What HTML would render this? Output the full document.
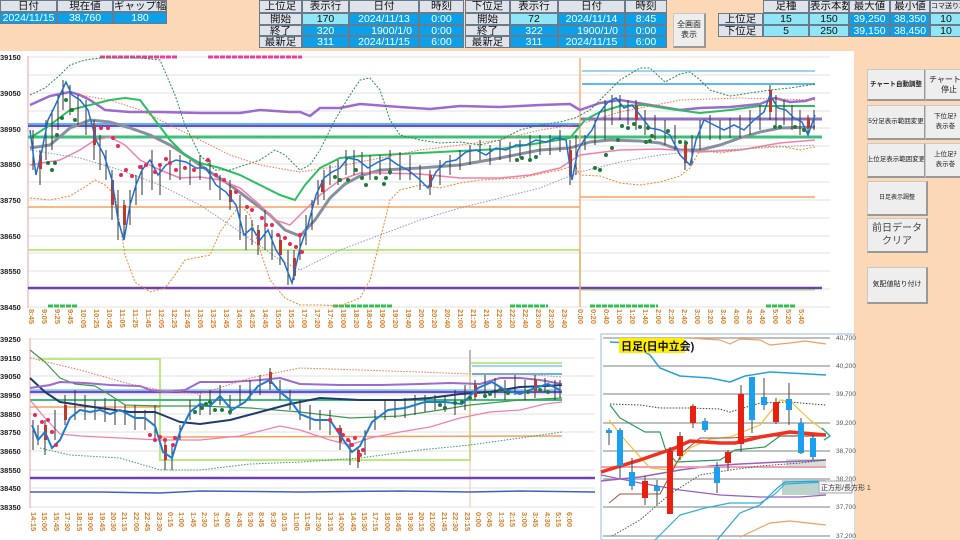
<!DOCTYPE html>
<html><head><meta charset="utf-8"><style>
*{margin:0;padding:0;box-sizing:border-box}
body{width:960px;height:540px;background:#fdd8b6;position:relative;overflow:hidden;font-family:"Liberation Sans","Noto Sans CJK JP",sans-serif}
.c{position:absolute;font-size:10.5px;line-height:11px;text-align:center;border:1px solid #6a7a8a;white-space:nowrap;overflow:hidden}
.h{background:#dfe3ea;color:#111}
.b{background:#0aa0ea;color:#fff}
.l{background:#8ee6f6;color:#111}
.btn{position:absolute;background:#eeeeee;border:1px solid #c8c8c8;border-right:2px solid #999;border-bottom:2px solid #999;font-size:6.5px;color:#222;display:flex;align-items:center;justify-content:center;text-align:center;line-height:10px;white-space:nowrap;overflow:hidden}
svg{position:absolute;left:0;top:0}
</style></head><body>
<div class="c h" style="left:0;top:0;width:57px;height:12px">日付</div>
<div class="c h" style="left:57px;top:0;width:56px;height:12px">現在値</div>
<div class="c h" style="left:113px;top:0;width:54px;height:12px">ギャップ幅</div>
<div class="c b" style="left:0;top:12px;width:57px;height:12px">2024/11/15</div>
<div class="c b" style="left:57px;top:12px;width:56px;height:12px">38,760</div>
<div class="c b" style="left:113px;top:12px;width:54px;height:12px">180</div>
<div class="c h" style="left:259px;top:0;width:43px;height:13px">上位足</div>
<div class="c h" style="left:302px;top:0;width:47px;height:13px">表示行</div>
<div class="c h" style="left:349px;top:0;width:70px;height:13px">日付</div>
<div class="c h" style="left:419px;top:0;width:45px;height:13px">時刻</div>
<div class="c h" style="left:259px;top:13px;width:43px;height:12px">開始</div>
<div class="c l" style="left:302px;top:13px;width:47px;height:12px">170</div>
<div class="c b" style="left:349px;top:13px;width:70px;height:12px">2024/11/13</div>
<div class="c b" style="left:419px;top:13px;width:45px;height:12px">0:00</div>
<div class="c h" style="left:259px;top:25px;width:43px;height:11px">終了</div>
<div class="c b" style="left:302px;top:25px;width:47px;height:11px">320</div>
<div class="c b" style="left:349px;top:25px;width:70px;height:11px;text-align:right;padding-right:6px">1900/1/0</div>
<div class="c b" style="left:419px;top:25px;width:45px;height:11px">0:00</div>
<div class="c h" style="left:259px;top:36px;width:43px;height:12px">最新足</div>
<div class="c b" style="left:302px;top:36px;width:47px;height:12px">311</div>
<div class="c b" style="left:349px;top:36px;width:70px;height:12px">2024/11/15</div>
<div class="c b" style="left:419px;top:36px;width:45px;height:12px">6:00</div>
<div class="c h" style="left:465px;top:0;width:45px;height:13px">下位足</div>
<div class="c h" style="left:510px;top:0;width:48px;height:13px">表示行</div>
<div class="c h" style="left:558px;top:0;width:67px;height:13px">日付</div>
<div class="c h" style="left:625px;top:0;width:42px;height:13px">時刻</div>
<div class="c h" style="left:465px;top:13px;width:45px;height:12px">開始</div>
<div class="c l" style="left:510px;top:13px;width:48px;height:12px">72</div>
<div class="c b" style="left:558px;top:13px;width:67px;height:12px">2024/11/14</div>
<div class="c b" style="left:625px;top:13px;width:42px;height:12px">8:45</div>
<div class="c h" style="left:465px;top:25px;width:45px;height:11px">終了</div>
<div class="c b" style="left:510px;top:25px;width:48px;height:11px">322</div>
<div class="c b" style="left:558px;top:25px;width:67px;height:11px;text-align:right;padding-right:6px">1900/1/0</div>
<div class="c b" style="left:625px;top:25px;width:42px;height:11px">0:00</div>
<div class="c h" style="left:465px;top:36px;width:45px;height:12px">最新足</div>
<div class="c b" style="left:510px;top:36px;width:48px;height:12px">311</div>
<div class="c b" style="left:558px;top:36px;width:67px;height:12px">2024/11/15</div>
<div class="c b" style="left:625px;top:36px;width:42px;height:12px">6:00</div>
<div class="btn" style="left:673px;top:13px;width:33px;height:35px;font-size:8px;white-space:normal">全画面<br>表示</div>
<div class="c h" style="left:763px;top:0;width:46px;height:13px">足種</div>
<div class="c h" style="left:809px;top:0;width:40px;height:13px">表示本数</div>
<div class="c h" style="left:849px;top:0;width:41px;height:13px">最大値</div>
<div class="c h" style="left:890px;top:0;width:40px;height:13px">最小値</div>
<div class="c h" style="left:930px;top:0;width:32px;height:13px;font-size:7px">コマ送り本</div>
<div class="c h" style="left:718px;top:13px;width:45px;height:12px">上位足</div>
<div class="c l" style="left:763px;top:13px;width:46px;height:12px">15</div>
<div class="c l" style="left:809px;top:13px;width:40px;height:12px">150</div>
<div class="c b" style="left:849px;top:13px;width:41px;height:12px">39,250</div>
<div class="c b" style="left:890px;top:13px;width:40px;height:12px">38,350</div>
<div class="c l" style="left:930px;top:13px;width:32px;height:12px">10</div>
<div class="c h" style="left:718px;top:25px;width:45px;height:12px">下位足</div>
<div class="c l" style="left:763px;top:25px;width:46px;height:12px">5</div>
<div class="c l" style="left:809px;top:25px;width:40px;height:12px">250</div>
<div class="c b" style="left:849px;top:25px;width:41px;height:12px">39,150</div>
<div class="c b" style="left:890px;top:25px;width:40px;height:12px">38,450</div>
<div class="c l" style="left:930px;top:25px;width:32px;height:12px">10</div>
<div style="position:absolute;left:0;top:51px;width:854px;height:489px;background:#fff"></div>
<div class="btn" style="left:867px;top:69px;width:59px;height:32px;font-weight:bold">チャート自動調整</div>
<div class="btn" style="left:925px;top:69px;width:40px;height:32px;justify-content:flex-start;padding-left:3px;font-size:8px">チャート自<br>停止</div>
<div class="btn" style="left:867px;top:105px;width:59px;height:35px">5分足表示範囲変更</div>
<div class="btn" style="left:925px;top:105px;width:40px;height:35px;justify-content:flex-start;padding-left:8px;white-space:normal">下位足ﾁ<br>表示巻</div>
<div class="btn" style="left:867px;top:143px;width:59px;height:35px">上位足表示範囲変更</div>
<div class="btn" style="left:925px;top:143px;width:40px;height:35px;justify-content:flex-start;padding-left:8px;white-space:normal">上位足ﾁ<br>表示巻</div>
<div class="btn" style="left:867px;top:181px;width:61px;height:35px;font-size:6px">日足表示調整</div>
<div class="btn" style="left:867px;top:218px;width:61px;height:35px;font-size:10px;line-height:13px;color:#444">前日データ<br>クリア</div>
<div class="btn" style="left:867px;top:267px;width:61px;height:37px;font-size:7px">気配値貼り付け</div>

<svg width="960" height="540" viewBox="0 0 960 540" font-family="Liberation Sans, sans-serif">
<g stroke="#e2e2e2" stroke-width="1">
<line x1="28" y1="57" x2="830" y2="57"/><line x1="28" y1="75" x2="830" y2="75"/><line x1="28" y1="93" x2="830" y2="93"/><line x1="28" y1="111" x2="830" y2="111"/><line x1="28" y1="128" x2="830" y2="128"/><line x1="28" y1="146" x2="830" y2="146"/><line x1="28" y1="164" x2="830" y2="164"/><line x1="28" y1="182" x2="830" y2="182"/><line x1="28" y1="200" x2="830" y2="200"/><line x1="28" y1="218" x2="830" y2="218"/><line x1="28" y1="236" x2="830" y2="236"/><line x1="28" y1="253" x2="830" y2="253"/><line x1="28" y1="271" x2="830" y2="271"/><line x1="28" y1="289" x2="830" y2="289"/><line x1="28" y1="307" x2="830" y2="307"/>
</g>
<line x1="28" y1="56" x2="28" y2="308" stroke="#f0a0a0"/>
<g font-size="7.5" font-weight="bold" fill="#222">
<text x="0" y="60">39150</text><text x="0" y="96">39050</text><text x="0" y="132">38950</text><text x="0" y="167">38850</text><text x="0" y="203">38750</text><text x="0" y="239">38650</text><text x="0" y="274">38550</text><text x="0" y="310">38450</text>
</g>
<line x1="100" y1="57" x2="178" y2="57" stroke="#f03c96" stroke-width="3" stroke-dasharray="5 1"/>
<line x1="208" y1="57" x2="302" y2="57" stroke="#f03c96" stroke-width="3" stroke-dasharray="5 1"/>
<line x1="48" y1="306" x2="77" y2="306" stroke="#2ec050" stroke-width="3" stroke-dasharray="5 1"/>
<line x1="333" y1="306" x2="392" y2="306" stroke="#2ec050" stroke-width="3" stroke-dasharray="5 1"/>
<line x1="510" y1="306" x2="548" y2="306" stroke="#2ec050" stroke-width="3" stroke-dasharray="5 1"/>
<line x1="590" y1="306" x2="658" y2="306" stroke="#2ec050" stroke-width="3" stroke-dasharray="5 1"/>
<line x1="766" y1="306" x2="796" y2="306" stroke="#2ec050" stroke-width="3" stroke-dasharray="5 1"/>
<line x1="28" y1="124" x2="580" y2="124" stroke="#5ab4f0" stroke-width="2"/>
<line x1="28" y1="126" x2="580" y2="126" stroke="#6a50c0" stroke-width="2"/>
<line x1="580" y1="119" x2="822" y2="119" stroke="#9070c0" stroke-width="3"/>
<line x1="28" y1="137" x2="822" y2="137" stroke="#3cbf78" stroke-width="3"/>
<line x1="28" y1="207" x2="580" y2="207" stroke="#f5a060" stroke-width="1.5"/>
<line x1="580" y1="197" x2="815" y2="197" stroke="#f5a060" stroke-width="1.5"/>
<line x1="28" y1="250" x2="580" y2="250" stroke="#b8ec80" stroke-width="2"/>
<line x1="580" y1="250" x2="580" y2="290" stroke="#b8ec80" stroke-width="2"/>
<line x1="580" y1="290" x2="815" y2="290" stroke="#b8ec80" stroke-width="1.5"/>
<line x1="28" y1="288" x2="822" y2="288" stroke="#7040b0" stroke-width="2.5"/>
<line x1="580" y1="58" x2="580" y2="307" stroke="#f5b07a" stroke-width="1.5"/>
<line x1="582" y1="71" x2="815" y2="71" stroke="#80c4f0" stroke-width="1.5"/>
<line x1="582" y1="84" x2="815" y2="84" stroke="#60b8f0" stroke-width="2"/>
<g fill="none" stroke-linejoin="round">
<polyline stroke="#9b6bd0" stroke-width="2.5" points="30,105 50,96 70,92 80,95 90,100 105,110 130,112 160,112 200,113 240,113 260,110 290,112 300,112 310,116 320,108 340,108 360,104 400,107 430,109 460,106 500,107 540,105 570,104 580,110 600,103 620,100 650,105 680,110 700,108 730,107 760,104 775,98 790,102 805,101 815,98"/>
<polyline stroke="#8890a0" stroke-width="3" points="30,148 50,145 70,128 90,120 110,122 130,128 150,135 170,145 190,158 210,172 230,185 250,200 270,215 285,230 300,236 315,220 330,198 345,184 360,176 380,170 420,168 460,165 500,158 540,150 570,148 590,142 610,140 640,141 660,143 680,150 700,150 720,145 740,138 760,132 780,128 815,127"/>
<polyline stroke="#2cbf60" stroke-width="2" points="30,138 50,125 70,110 90,105 110,100 125,98 140,100 155,120 170,140 185,155 200,163 220,168 240,175 260,185 280,195 295,200 305,185 320,168 340,158 360,156 380,155 420,153 460,151 500,149 540,143 570,138 585,120 600,112 620,106 645,105 670,109 700,113 730,110 760,106 790,106 815,106"/>
<polyline stroke="#f07fb0" stroke-width="1.5" points="30,165 60,160 80,150 95,140 110,137 125,145 140,160 160,170 180,178 200,177 220,180 240,188 260,205 275,220 290,225 300,215 320,195 340,180 360,173 380,173 420,174 460,178 500,178 530,175 560,168 580,155 620,150 660,149 700,152 740,150 780,143 815,140"/>
<polyline stroke="#2a8a4a" stroke-width="1" stroke-dasharray="2 1.5" points="30,95 45,88 60,75 70,65 85,60 100,58 120,58 140,58 160,60 175,95 185,125 200,155 215,170 230,170 245,165 260,160 275,150 285,155 300,170 310,165 320,150 335,120 350,95 360,80 370,78 380,90 390,120 400,135 420,140 440,143 460,142 480,145 500,140 520,130 540,125 560,122 575,118 590,110 605,95 620,80 640,68 650,68 665,82 680,74 690,72 700,80 710,90 730,96 750,93 770,90 790,88 815,84"/>
<polyline stroke="#e8892a" stroke-width="1" stroke-dasharray="2 1.5" points="30,198 50,200 70,196 85,187 95,180 105,185 115,195 120,225 125,255 135,282 150,292 165,288 175,275 185,260 195,258 210,255 220,232 230,218 240,205 250,215 260,250 270,280 285,298 300,305 320,305 340,306 360,298 370,280 380,240 390,200 400,190 420,185 440,188 460,183 480,180 520,178 560,170 575,165 580,175 600,176 620,183 640,185 660,182 680,176 690,168 700,150 720,153 740,150 760,147 780,146 800,150 815,147"/>
<polyline stroke="#f07050" stroke-width="1" stroke-dasharray="1.5 1.5" points="80,95 110,100 140,110 170,125 200,140 230,155 260,165 300,172 340,166 380,158 420,150 460,145 500,140 540,130 580,124 620,112 680,100 740,98 815,100"/>
<polyline stroke="#8898c0" stroke-width="1" stroke-dasharray="1.5 1.5" points="30,150 80,158 120,170 160,185 200,205 240,232 280,260 300,270 340,250 380,235 420,220 460,208 500,198 540,188 580,172 620,162 660,155 700,151 760,148 815,145"/>
</g>
<g stroke="#333" stroke-width="1">
<path d="M33 130V170M40 150V185M46 120V160M52 110V150M58 95V130M63 80V110M70 85V115M78 95V125M86 100V135M94 120V160M100 135V170M106 150V180M112 170V220M118 190V240M124 200V240M130 190V225M136 175V205M142 165V195M152 150V190M160 165V195M170 150V180M180 155V180M190 160V185M200 155V180M210 160V190M220 175V200M230 180V210M240 195V240M246 215V250M252 220V245M258 225V255M265 210V250M272 230V260M280 235V265M288 250V285M294 250V280M300 235V260M306 215V245M312 200V230M318 180V205M324 170V200M330 165V185M338 160V185M346 150V175M354 150V175M362 152V175M370 155V180M380 155V175M390 150V175M400 152V180M410 155V180M420 165V190M430 170V195M440 160V185M450 155V175M460 150V170M470 145V165M480 140V160M490 145V165M500 140V160M510 142V162M520 140V158M530 135V160M540 135V155M550 135V155M560 130V152M570 140V185M576 135V175M585 135V150M595 120V145M605 100V140M612 95V125M620 95V120M628 100V125M636 100V130M645 110V135M655 115V140M665 120V145M675 125V150M685 140V170M692 135V165M700 120V150M710 115V140M720 120V140M730 118V138M740 115V138M750 110V135M760 105V130M770 85V120M776 95V125M784 100V125M792 105V130M800 110V135M808 115V135M814 110V130"/>
</g>
<g fill="#c0392b"><rect x="39" y="155" width="3" height="14"/><rect x="93" y="125" width="3" height="20"/><rect x="111" y="180" width="3" height="25"/><rect x="123" y="205" width="3" height="20"/><rect x="229" y="190" width="3" height="12"/><rect x="257" y="230" width="3" height="15"/><rect x="279" y="240" width="3" height="15"/><rect x="293" y="258" width="3" height="18"/><rect x="321" y="180" width="3" height="12"/><rect x="429" y="175" width="3" height="12"/><rect x="569" y="150" width="3" height="25"/><rect x="635" y="105" width="3" height="15"/><rect x="684" y="145" width="3" height="18"/><rect x="769" y="90" width="3" height="22"/><rect x="807" y="118" width="3" height="10"/></g>
<polyline fill="none" stroke="#1f6fd0" stroke-width="1.5" points="30,130 36,175 42,150 48,120 54,108 60,95 66,82 72,95 80,100 88,110 96,140 104,155 112,180 118,220 124,240 130,205 136,185 142,170 150,160 158,175 166,165 176,160 186,162 196,168 206,168 216,185 226,192 236,205 244,235 252,228 260,240 268,230 276,250 284,262 292,283 300,248 308,225 316,195 324,178 332,172 340,168 348,158 358,160 368,168 378,162 388,158 398,165 408,170 418,178 428,188 436,172 446,162 456,160 466,152 476,150 486,155 496,148 506,150 516,145 526,145 536,140 546,142 556,138 566,140 572,180 578,150 584,140 592,130 600,112 608,102 616,98 624,108 632,105 640,115 650,128 660,130 670,135 680,155 690,165 696,140 704,120 714,125 724,130 734,125 744,130 754,120 764,112 770,95 778,108 786,110 794,118 802,122 808,135 815,115"/>
<g fill="#e8285a">
<circle cx="101" cy="128" r="2"/><circle cx="108" cy="128" r="2"/><circle cx="113" cy="138" r="2"/><circle cx="118" cy="146" r="2"/><circle cx="121" cy="175" r="2"/><circle cx="126" cy="170" r="2"/><circle cx="132" cy="176" r="2"/><circle cx="140" cy="167" r="2"/><circle cx="146" cy="165" r="2"/><circle cx="155" cy="172" r="2"/><circle cx="160" cy="165" r="2"/><circle cx="166" cy="159" r="2"/><circle cx="170" cy="163" r="2"/><circle cx="176" cy="170" r="2"/><circle cx="185" cy="168" r="2"/><circle cx="194" cy="170" r="2"/><circle cx="208" cy="160" r="2"/><circle cx="216" cy="175" r="2"/><circle cx="224" cy="180" r="2"/><circle cx="236" cy="192" r="2"/><circle cx="247" cy="207" r="2"/><circle cx="252" cy="210" r="2"/><circle cx="262" cy="218" r="2"/><circle cx="266" cy="225" r="2"/><circle cx="272" cy="225" r="2"/><circle cx="278" cy="235" r="2"/><circle cx="285" cy="238" r="2"/><circle cx="290" cy="244" r="2"/><circle cx="296" cy="247" r="2"/><circle cx="300" cy="235" r="2"/><circle cx="302" cy="252" r="2"/>
</g>
<g fill="#1f7a3a">
<circle cx="48" cy="163" r="2"/><circle cx="52" cy="170" r="2"/><circle cx="55" cy="163" r="2"/><circle cx="57" cy="135" r="2"/><circle cx="62" cy="118" r="2"/><circle cx="66" cy="100" r="2"/><circle cx="72" cy="110" r="2"/><circle cx="75" cy="120" r="2"/><circle cx="335" cy="177" r="2"/><circle cx="340" cy="180" r="2"/><circle cx="348" cy="180" r="2"/><circle cx="356" cy="170" r="2"/><circle cx="362" cy="178" r="2"/><circle cx="366" cy="185" r="2"/><circle cx="376" cy="178" r="2"/><circle cx="384" cy="184" r="2"/><circle cx="386" cy="178" r="2"/><circle cx="390" cy="172" r="2"/><circle cx="517" cy="160" r="2"/><circle cx="522" cy="158" r="2"/><circle cx="530" cy="160" r="2"/><circle cx="536" cy="157" r="2"/><circle cx="595" cy="168" r="2"/><circle cx="600" cy="170" r="2"/><circle cx="606" cy="155" r="2"/><circle cx="612" cy="148" r="2"/><circle cx="618" cy="140" r="2"/><circle cx="622" cy="126" r="2"/><circle cx="628" cy="128" r="2"/><circle cx="634" cy="124" r="2"/><circle cx="640" cy="127" r="2"/><circle cx="648" cy="128" r="2"/><circle cx="652" cy="136" r="2"/><circle cx="668" cy="131" r="2"/><circle cx="680" cy="142" r="2"/><circle cx="686" cy="143" r="2"/><circle cx="646" cy="142" r="2"/><circle cx="650" cy="141" r="2"/><circle cx="775" cy="127" r="2"/><circle cx="780" cy="127" r="2"/><circle cx="795" cy="127" r="2"/><circle cx="804" cy="130" r="2"/>
</g>
<g font-size="7.5" font-weight="bold" fill="#d8802a">
<text transform="translate(29,309) rotate(90)">8:45</text><text transform="translate(42,309) rotate(90)">9:05</text><text transform="translate(55,309) rotate(90)">9:25</text><text transform="translate(68,309) rotate(90)">9:45</text><text transform="translate(81,309) rotate(90)">10:05</text><text transform="translate(94,309) rotate(90)">10:25</text><text transform="translate(107,309) rotate(90)">10:45</text><text transform="translate(120,309) rotate(90)">11:05</text><text transform="translate(133,309) rotate(90)">11:25</text><text transform="translate(146,309) rotate(90)">11:45</text><text transform="translate(159,309) rotate(90)">12:05</text><text transform="translate(172,309) rotate(90)">12:25</text><text transform="translate(185,309) rotate(90)">12:45</text><text transform="translate(198,309) rotate(90)">13:05</text><text transform="translate(211,309) rotate(90)">13:25</text><text transform="translate(224,309) rotate(90)">13:45</text><text transform="translate(237,309) rotate(90)">14:05</text><text transform="translate(250,309) rotate(90)">14:25</text><text transform="translate(263,309) rotate(90)">14:45</text><text transform="translate(276,309) rotate(90)">15:05</text><text transform="translate(289,309) rotate(90)">15:25</text><text transform="translate(302,309) rotate(90)">17:00</text><text transform="translate(315,309) rotate(90)">17:20</text><text transform="translate(328,309) rotate(90)">17:40</text><text transform="translate(341,309) rotate(90)">18:00</text><text transform="translate(354,309) rotate(90)">18:20</text><text transform="translate(367,309) rotate(90)">18:40</text><text transform="translate(380,309) rotate(90)">19:00</text><text transform="translate(393,309) rotate(90)">19:20</text><text transform="translate(406,309) rotate(90)">19:40</text><text transform="translate(419,309) rotate(90)">20:00</text><text transform="translate(432,309) rotate(90)">20:20</text><text transform="translate(445,309) rotate(90)">20:40</text><text transform="translate(458,309) rotate(90)">21:00</text><text transform="translate(471,309) rotate(90)">21:20</text><text transform="translate(484,309) rotate(90)">21:40</text><text transform="translate(497,309) rotate(90)">22:00</text><text transform="translate(510,309) rotate(90)">22:20</text><text transform="translate(523,309) rotate(90)">22:40</text><text transform="translate(536,309) rotate(90)">23:00</text><text transform="translate(549,309) rotate(90)">23:20</text><text transform="translate(562,309) rotate(90)">23:40</text><text transform="translate(578,309) rotate(90)">0:00</text><text transform="translate(591,309) rotate(90)">0:20</text><text transform="translate(604,309) rotate(90)">0:40</text><text transform="translate(617,309) rotate(90)">1:00</text><text transform="translate(630,309) rotate(90)">1:20</text><text transform="translate(643,309) rotate(90)">1:40</text><text transform="translate(656,309) rotate(90)">2:00</text><text transform="translate(669,309) rotate(90)">2:20</text><text transform="translate(682,309) rotate(90)">2:40</text><text transform="translate(695,309) rotate(90)">3:00</text><text transform="translate(708,309) rotate(90)">3:20</text><text transform="translate(721,309) rotate(90)">3:40</text><text transform="translate(734,309) rotate(90)">4:00</text><text transform="translate(747,309) rotate(90)">4:20</text><text transform="translate(760,309) rotate(90)">4:40</text><text transform="translate(773,309) rotate(90)">5:00</text><text transform="translate(786,309) rotate(90)">5:20</text><text transform="translate(799,309) rotate(90)">5:40</text>
</g>

<g stroke="#e2e2e2"><line x1="30" y1="339" x2="595" y2="339"/><line x1="30" y1="358" x2="595" y2="358"/><line x1="30" y1="376" x2="595" y2="376"/><line x1="30" y1="395" x2="595" y2="395"/><line x1="30" y1="414" x2="595" y2="414"/><line x1="30" y1="432" x2="595" y2="432"/><line x1="30" y1="451" x2="595" y2="451"/><line x1="30" y1="470" x2="595" y2="470"/><line x1="30" y1="488" x2="595" y2="488"/><line x1="30" y1="507" x2="595" y2="507"/></g>
<line x1="30" y1="338" x2="30" y2="508" stroke="#f0a0a0"/>
<g font-size="7.5" font-weight="bold" fill="#222">
<text x="0" y="342">39250</text><text x="0" y="361">39150</text><text x="0" y="379">39050</text><text x="0" y="398">38950</text><text x="0" y="417">38850</text><text x="0" y="435">38750</text><text x="0" y="454">38650</text><text x="0" y="473">38550</text><text x="0" y="491">38450</text><text x="0" y="510">38350</text>
</g>
<polyline fill="none" stroke="#b8ec80" stroke-width="2" points="38,359 160,359 160,460 470,460 470,363 562,363"/>
<line x1="470" y1="350" x2="470" y2="507" stroke="#f5c09a" stroke-width="1"/>
<line x1="470" y1="350" x2="470" y2="372" stroke="#bbb" stroke-width="2"/>
<line x1="472" y1="366" x2="562" y2="366" stroke="#80c4f0" stroke-width="1.5"/>
<line x1="472" y1="374" x2="562" y2="374" stroke="#60b8f0" stroke-width="2"/>
<line x1="30" y1="392" x2="562" y2="392" stroke="#6a50c0" stroke-width="2.5"/>
<line x1="30" y1="390" x2="562" y2="390" stroke="#7ec8f0" stroke-width="1.5"/>
<line x1="30" y1="400" x2="562" y2="400" stroke="#3cbf78" stroke-width="2"/>
<line x1="30" y1="407" x2="160" y2="407" stroke="#f5a060" stroke-width="1.5"/>
<line x1="160" y1="437" x2="562" y2="436" stroke="#f5a060" stroke-width="1.5"/>
<line x1="30" y1="478" x2="595" y2="478" stroke="#7040b0" stroke-width="2.5"/>
<polyline fill="none" stroke="#4060c0" stroke-width="1.5" points="30,492 100,492 160,493 200,491 300,492 400,491 470,492 520,491 595,492"/>
<g fill="none" stroke-linejoin="round">
<polyline stroke="#3a9a4a" stroke-width="1.2" points="30,350 45,362 60,378 75,384 95,386 110,395 125,405 160,406 200,406 250,408 300,412 350,418 400,416 440,410 470,405 520,400 562,398"/>
<polyline stroke="#1f3a70" stroke-width="2" points="30,378 45,392 60,402 80,405 100,408 130,412 155,412 180,422 200,424 230,420 260,412 290,404 320,398 360,400 400,400 430,398 460,394 490,392 520,387 545,386 562,385"/>
<polyline stroke="#9b6bd0" stroke-width="2" points="30,388 50,385 60,382 85,383 110,385 140,386 150,390 165,392 185,390 200,382 230,382 260,380 280,378 300,384 340,385 380,385 420,384 450,383 480,384 500,378 520,378 540,380 562,384"/>
<polyline stroke="#f07fb0" stroke-width="1.2" points="30,400 45,418 60,434 80,436 120,438 160,440 200,440 240,436 280,426 300,430 330,440 350,445 370,438 400,432 430,427 460,418 490,412 520,410 545,404 562,402"/>
<polyline stroke="#f07050" stroke-width="1" stroke-dasharray="1.5 1.5" points="30,358 80,370 130,384 160,390 200,394 250,378 300,368 360,370 420,372 470,374 520,374 562,377"/>
<polyline stroke="#3a9a6a" stroke-width="1" stroke-dasharray="1.5 1.5" points="40,448 70,455 120,458 160,470 200,470 250,464 300,462 360,458 420,450 470,445 520,438 562,432"/>
</g>
<g stroke="#333"><path d="M33 420V450M38 425V445M45 420V455M55 410V440M65 395V425M75 390V420M85 395V420M95 400V420M105 398V422M115 400V425M125 405V425M135 405V430M145 410V430M155 405V440M165 440V470M172 445V470M180 425V440M190 400V420M200 395V415M210 390V415M220 385V405M230 395V415M240 385V405M250 380V400M260 375V395M270 368V390M280 380V400M290 390V410M300 400V420M310 405V430M320 410V430M330 410V435M340 425V450M350 440V465M358 448V468M365 430V455M375 410V430M385 400V420M395 400V418M405 398V418M415 395V415M425 395V412M435 395V410M445 395V412M455 390V415M465 385V410M475 380V400M485 375V395M495 378V398M505 380V400M515 375V395M525 380V400M535 375V398M545 378V392M555 380V400M560 380V398"/></g>
<g fill="#c0392b"><rect x="44" y="425" width="3" height="15"/><rect x="64" y="405" width="3" height="15"/><rect x="164" y="445" width="3" height="15"/><rect x="269" y="372" width="3" height="12"/><rect x="339" y="428" width="3" height="14"/><rect x="357" y="450" width="3" height="12"/><rect x="474" y="385" width="3" height="12"/><rect x="534" y="380" width="3" height="12"/></g>
<polyline fill="none" stroke="#1f7ad0" stroke-width="2" points="32,425 38,440 45,432 52,448 60,440 70,418 80,410 90,412 100,410 110,414 120,410 135,418 145,418 155,426 163,452 172,458 180,432 190,412 200,404 210,406 220,396 232,410 245,402 258,386 270,380 280,392 290,400 300,414 315,420 330,420 342,438 352,452 360,446 372,422 388,410 405,408 425,402 445,402 462,404 478,388 492,382 505,390 520,394 535,388 548,384 560,390"/>
<g fill="#e8285a"><circle cx="35" cy="415" r="2"/><circle cx="42" cy="422" r="2"/><circle cx="48" cy="420" r="2"/><circle cx="52" cy="432" r="2"/><circle cx="56" cy="445" r="2"/><circle cx="150" cy="435" r="2"/><circle cx="155" cy="440" r="2"/><circle cx="160" cy="437" r="2"/><circle cx="165" cy="440" r="2"/><circle cx="173" cy="445" r="2"/><circle cx="175" cy="438" r="2"/><circle cx="330" cy="420" r="2"/><circle cx="338" cy="430" r="2"/><circle cx="343" cy="435" r="2"/><circle cx="348" cy="440" r="2"/><circle cx="352" cy="445" r="2"/><circle cx="355" cy="438" r="2"/><circle cx="360" cy="455" r="2"/><circle cx="363" cy="450" r="2"/></g>
<g fill="#1f7a3a"><circle cx="195" cy="412" r="2"/><circle cx="202" cy="408" r="2"/><circle cx="206" cy="404" r="2"/><circle cx="210" cy="402" r="2"/><circle cx="215" cy="410" r="2"/><circle cx="222" cy="410" r="2"/><circle cx="230" cy="412" r="2"/><circle cx="440" cy="405" r="2"/><circle cx="445" cy="408" r="2"/><circle cx="455" cy="403" r="2"/><circle cx="462" cy="402" r="2"/><circle cx="470" cy="398" r="2"/><circle cx="485" cy="396" r="2"/><circle cx="490" cy="394" r="2"/><circle cx="500" cy="390" r="2"/><circle cx="508" cy="393" r="2"/><circle cx="528" cy="392" r="2"/><circle cx="540" cy="390" r="2"/><circle cx="548" cy="392" r="2"/></g>
<g font-size="7.5" font-weight="bold" fill="#d8802a">
<text transform="translate(31,512) rotate(90)">14:15</text><text transform="translate(42,512) rotate(90)">15:00</text><text transform="translate(54,512) rotate(90)">15:45</text><text transform="translate(65,512) rotate(90)">17:30</text><text transform="translate(77,512) rotate(90)">18:15</text><text transform="translate(88,512) rotate(90)">19:00</text><text transform="translate(100,512) rotate(90)">19:45</text><text transform="translate(111,512) rotate(90)">20:30</text><text transform="translate(122,512) rotate(90)">21:15</text><text transform="translate(134,512) rotate(90)">22:00</text><text transform="translate(145,512) rotate(90)">22:45</text><text transform="translate(157,512) rotate(90)">23:30</text><text transform="translate(168,512) rotate(90)">0:15</text><text transform="translate(179,512) rotate(90)">1:00</text><text transform="translate(191,512) rotate(90)">1:45</text><text transform="translate(202,512) rotate(90)">2:30</text><text transform="translate(214,512) rotate(90)">3:15</text><text transform="translate(225,512) rotate(90)">4:00</text><text transform="translate(237,512) rotate(90)">4:45</text><text transform="translate(248,512) rotate(90)">5:30</text><text transform="translate(259,512) rotate(90)">8:45</text><text transform="translate(271,512) rotate(90)">9:30</text><text transform="translate(282,512) rotate(90)">10:15</text><text transform="translate(294,512) rotate(90)">11:00</text><text transform="translate(305,512) rotate(90)">11:45</text><text transform="translate(316,512) rotate(90)">12:30</text><text transform="translate(328,512) rotate(90)">13:15</text><text transform="translate(339,512) rotate(90)">14:00</text><text transform="translate(351,512) rotate(90)">14:45</text><text transform="translate(362,512) rotate(90)">15:30</text><text transform="translate(373,512) rotate(90)">17:15</text><text transform="translate(385,512) rotate(90)">18:00</text><text transform="translate(396,512) rotate(90)">18:45</text><text transform="translate(408,512) rotate(90)">19:30</text><text transform="translate(419,512) rotate(90)">20:15</text><text transform="translate(430,512) rotate(90)">21:00</text><text transform="translate(442,512) rotate(90)">21:45</text><text transform="translate(453,512) rotate(90)">22:30</text><text transform="translate(465,512) rotate(90)">23:15</text><text transform="translate(476,512) rotate(90)">0:00</text><text transform="translate(487,512) rotate(90)">0:45</text><text transform="translate(499,512) rotate(90)">1:30</text><text transform="translate(510,512) rotate(90)">2:15</text><text transform="translate(522,512) rotate(90)">3:00</text><text transform="translate(533,512) rotate(90)">3:45</text><text transform="translate(545,512) rotate(90)">4:30</text><text transform="translate(556,512) rotate(90)">5:15</text><text transform="translate(567,512) rotate(90)">6:00</text>
</g>

<rect x="601" y="334" width="254" height="206" fill="#fff" stroke="#9ab8d8" stroke-width="1"/>
<rect x="855" y="334" width="105" height="206" fill="#fdd8b6"/>
<g stroke="#999" stroke-width="1.2"><line x1="603" y1="338" x2="830" y2="338"/><line x1="603" y1="366" x2="830" y2="366"/><line x1="603" y1="394" x2="830" y2="394"/><line x1="603" y1="423" x2="830" y2="423"/><line x1="603" y1="451" x2="830" y2="451"/><line x1="603" y1="479" x2="830" y2="479"/><line x1="603" y1="507" x2="830" y2="507"/><line x1="603" y1="536" x2="830" y2="536"/></g>
<g font-size="6.5" fill="#555"><text x="836" y="340">40,700</text><text x="836" y="368">40,200</text><text x="836" y="396">39,700</text><text x="836" y="425">39,200</text><text x="836" y="453">38,700</text><text x="836" y="481">38,200</text><text x="836" y="509">37,700</text><text x="836" y="538">37,200</text></g>
<rect x="782" y="480" width="44" height="15" fill="#8fb8a8" opacity=".6"/>
<rect x="786" y="459" width="40" height="8" fill="#a8c4b0" opacity=".5"/>
<g fill="none" stroke-linejoin="round">
<polyline stroke="#f0a060" stroke-width="1.2" points="690,338 720,340 730,344 740,339 760,340 770,345 790,343 805,341 826,344"/>
<polyline stroke="#2aa0d8" stroke-width="1.5" points="610,342 630,343 650,355 660,368 680,376 710,378 730,382 745,376 770,372 790,373 826,375"/>
<polyline stroke="#444" stroke-width="1" stroke-dasharray="1.5 1.5" points="610,404 640,405 660,408 690,408 720,409 730,412 760,403 790,402 826,405"/>
<polyline stroke="#2a9a5a" stroke-width="1.2" points="610,405 620,418 645,432 660,432 665,448 676,462 720,460 735,450 765,447 780,436 826,436"/>
<polyline stroke="#f0c030" stroke-width="1.2" points="609,420 625,440 650,468 670,470 690,448 710,439 730,437 760,425 780,400 790,401 810,420 826,432"/>
<polyline stroke="#9a60c0" stroke-width="1.5" points="601,481 640,477 680,470 710,466 740,464 780,462 826,460"/>
<polyline stroke="#9a60c0" stroke-width="1.2" points="601,475 640,483 680,490 720,495 760,497 800,497 826,495"/>
<line x1="601" y1="467" x2="826" y2="467" stroke="#f0a0b0" stroke-width="2"/>
<polyline stroke="#a05040" stroke-width="1" points="609,503 620,494 660,494 682,453 700,438 730,438 760,436 790,436 826,436"/>
<polyline stroke="#555" stroke-width="1" stroke-dasharray="1.5 1.5" points="612,536 640,520 670,494 700,475 730,470 760,466 800,463 826,460"/>
<polyline stroke="#30b0e0" stroke-width="1.2" points="655,540 680,515 705,508 730,503 760,503 775,494 785,484 826,482"/>
<polyline stroke="#30a0d0" stroke-width="1.2" points="717,540 740,513 760,505 775,490 785,482 826,481"/>
<polyline stroke="#f0a060" stroke-width="1.2" points="740,537 770,523 790,521 826,525"/>
<polyline stroke="#f03020" stroke-width="3.5" points="601,472 640,460 675,448 690,441 720,443 735,443 760,437 790,432 826,435"/>
<polyline stroke="#30b0a0" stroke-width="1.5" points="822,428 830,436 824,440"/>
</g>
<g stroke="#444"><path d="M609 428V445M620 428V478M632 458V490M645 476V505M657 480V505M670 447V514M680 432V460M693 404V428M705 418V432M717 462V493M728 450V470M741 385V452M752 377V433M764 378V410M776 398V424M789 383V425M801 418V454M813 435V460"/></g>
<g fill="#1aa0f0"><rect x="606" y="430" width="6" height="3"/><rect x="617" y="430" width="6" height="36"/><rect x="629" y="472" width="6" height="14"/><rect x="654" y="486" width="6" height="5"/><rect x="702" y="421" width="6" height="9"/><rect x="714" y="467" width="6" height="16"/><rect x="749" y="377" width="6" height="43"/><rect x="761" y="397" width="6" height="8"/><rect x="786" y="399" width="6" height="11"/><rect x="798" y="423" width="6" height="30"/><rect x="810" y="438" width="6" height="19"/></g>
<g fill="#e8200f"><rect x="642" y="481" width="6" height="17"/><rect x="667" y="451" width="6" height="63"/><rect x="677" y="436" width="6" height="20"/><rect x="690" y="406" width="6" height="17"/><rect x="725" y="452" width="6" height="11"/><rect x="738" y="394" width="6" height="50"/><rect x="773" y="402" width="6" height="20"/></g>
<rect x="619" y="338" width="66" height="15" fill="#ffee00"/>
<text x="621" y="350" font-size="11" font-weight="bold" fill="#111" font-family="Liberation Sans, Noto Sans CJK JP, sans-serif">日足(日中立会)</text>
<rect x="819" y="481" width="33" height="12" fill="#f4f4f4" stroke="#aaa"/>
<text x="821" y="490" font-size="7" fill="#333" font-family="Liberation Sans, Noto Sans CJK JP, sans-serif">正方形/長方形 1</text>
</svg>
</body></html>
